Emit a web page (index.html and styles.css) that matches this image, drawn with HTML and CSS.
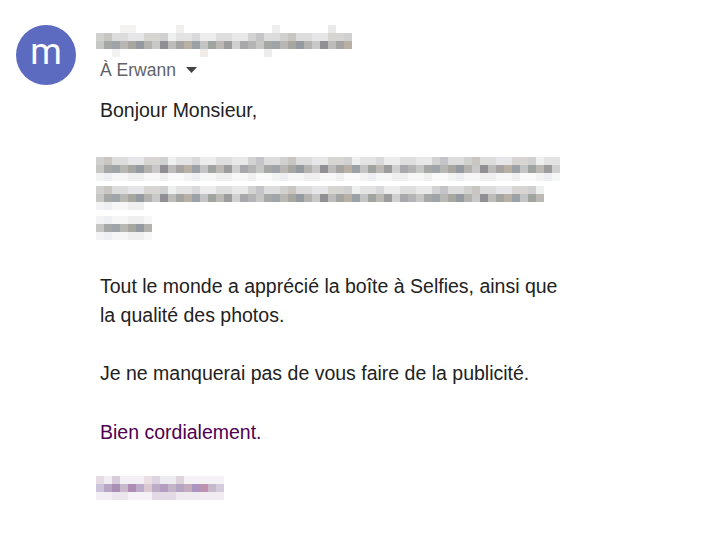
FILE: index.html
```html
<!DOCTYPE html>
<html lang="fr">
<head>
  <meta charset="UTF-8" />
  <title>Message</title>
  <link rel="stylesheet" href="styles.css">
</head>
<body>

  <!-- Message -->
  <div class="message">
    <div class="avatar">m</div>

    <div class="content">
      <!-- En-tête -->
      <div class="header">
        <div class="blur sender">
          <div class="row r-top"></div>
          <div class="row r-mid"></div>
          <div class="row r-dark"></div>
          <div class="row r-low"></div>
        </div>
        <div class="recipient">
          À Erwann
          <svg class="caret" width="11" height="6" viewBox="0 0 11 6"><path d="M0 0h11L5.5 6z" fill="#444"/></svg>
        </div>
      </div>

      <!-- Corps -->
      <div class="body">
        <p>Bonjour Monsieur,</p>

        <div class="blur-para">
          <div class="blur line" style="width: 464px">
            <div class="row r-mid"></div>
            <div class="row r-dark"></div>
            <div class="row r-faint"></div>
          </div>
          <div class="blur line" style="width: 448px">
            <div class="row r-mid"></div>
            <div class="row r-dark"></div>
            <div class="row r-faint short"></div>
          </div>
          <div class="blur line" style="width: 56px">
            <div class="row r-faint"></div>
            <div class="row r-dark"></div>
            <div class="row r-faint"></div>
          </div>
        </div>

        <p>Tout le monde a apprécié la boîte à Selfies, ainsi que<br>la qualité des photos.</p>

        <p>Je ne manquerai pas de vous faire de la publicité.</p>

        <p class="quoted">Bien cordialement.</p>

        <div class="blur signature">
          <div class="row s-top"></div>
          <div class="row s-mid"></div>
          <div class="row s-low"></div>
        </div>
      </div>
    </div>
  </div>

</body>
</html>
```

FILE: styles.css
```css
/* Général */
body {
  margin: 0;
  background: #fff;
  color: #222;
  font-family: "Liberation Sans", Arial, sans-serif;
}

.message {
  display: flex;
  padding: 25px 0 0 16px;
}

/* Avatar */
.avatar {
  width: 60px;
  height: 60px;
  border-radius: 50%;
  background: #5c6bc0;
  color: #fff;
  font-family: Roboto, "Liberation Sans", sans-serif;
  font-size: 36px;
  line-height: 54px;
  text-align: center;
  flex-shrink: 0;
}

.content {
  margin-left: 20px;
}

/* En-tête */
.recipient {
  margin-top: 1px;
  padding-left: 4px;
  font-size: 17.5px;
  line-height: 24px;
  color: #5f6368;
  display: flex;
  align-items: center;
}
.caret {
  margin-left: 10px;
}

/* Flou (mosaïque) */
.blur .row {
  height: 8px;
}
.sender {
  width: 256px;
}
.r-top {
  background: repeating-linear-gradient(90deg,
    #fff 0 24px, #f4f3f1 24px 40px, #fff 40px 80px, #f1efec 80px 88px,
    #fff 88px 176px, #eeeeee 176px 184px, #fff 184px 232px, #e9e9e9 232px 240px, #fff 240px 256px);
}
.r-mid {
  background: repeating-linear-gradient(90deg,
    #d0d0ce 0 8px, #c9c6c2 8px 16px, #dcdcdc 16px 32px, #e6e6e8 32px 48px,
    #d6d5d2 48px 64px, #cfd0cf 64px 72px, #eef0f0 72px 80px, #e3e3e3 80px 96px,
    #d9d9dc 96px 104px, #ececec 104px 120px, #dedede 120px 136px, #e8e8e8 136px 152px,
    #d2d2d2 152px 160px, #c3c3c8 160px 168px, #dcdcdc 168px 184px);
}
.r-dark {
  background: repeating-linear-gradient(90deg,
    #c6c6c4 0 8px, #a6a8a8 8px 16px, #9fa4a8 16px 24px, #b8b7b4 24px 32px,
    #a8a6a0 32px 40px, #949aa0 40px 48px, #b4b2ae 48px 56px, #c8c8c8 56px 64px,
    #8f8f94 64px 72px, #bdbcbb 72px 80px, #a4a5a3 80px 88px, #b8b0a4 88px 96px,
    #9aa2a8 96px 104px, #c4c4c4 104px 112px, #a0a4a0 112px 120px, #bcb8b4 120px 128px,
    #9c9c9c 128px 136px, #d0d0d0 136px 144px, #a8a8ac 144px 152px, #b4b4b4 152px 160px);
}
.r-low {
  background: repeating-linear-gradient(90deg,
    #fff 0 16px, #f2f2f2 16px 24px, #fff 24px 104px, #eeebe8 104px 112px,
    #fff 112px 168px, #ededed 168px 176px, #fff 176px 256px);
}
.r-faint {
  background: repeating-linear-gradient(90deg,
    #f3f3f3 0 8px, #eeeff2 8px 16px, #f6f6f6 16px 32px, #efefef 32px 48px,
    #f7f7f7 48px 64px, #f0f0f0 64px 72px, #fafafa 72px 88px);
}

.blur-para {
  margin-bottom: 29.25px;
}
.blur.line {
  display: flex;
  flex-direction: column;
  justify-content: center;
  height: 29.25px;
  margin-left: -4px;
}
.blur.line .row {
  width: 100%;
}
.blur.line .row.short {
  width: 48px;
}

/* Corps */
.body {
  margin-top: 14px;
  padding-left: 4px;
  font-size: 19.5px;
  line-height: 29.25px;
}
.body p {
  margin: 0 0 29.25px;
}
.quoted {
  color: #500050;
}

.signature {
  width: 128px;
  margin-left: -4px;
  margin-top: 0;
}
.s-top {
  background: repeating-linear-gradient(90deg,
    #e4dce2 0 8px, #f0eef2 8px 16px, #d8ccdc 16px 24px, #f2f0f4 24px 48px,
    #ecdfe4 48px 56px, #dcd4e0 56px 64px, #ececf0 64px 80px, #e0d4dc 80px 88px, #f4f2f4 88px 128px);
}
.s-mid {
  background: repeating-linear-gradient(90deg,
    #ccc4d8 0 8px, #b8a4c4 8px 16px, #a890b4 16px 24px, #c8b8cc 24px 32px,
    #ac8cb4 32px 40px, #bcacc8 40px 48px, #dcc8d0 48px 56px, #bcacc8 56px 64px,
    #b49cc0 64px 72px, #c4b4c8 72px 80px, #b4a4c4 80px 88px, #c4acbc 88px 96px,
    #ac94c0 96px 104px, #bc94b0 104px 112px, #c8b8cc 112px 120px, #d4ccdc 120px 128px);
}
.s-low {
  background: repeating-linear-gradient(90deg,
    #f2eef2 0 16px, #ebe6ee 16px 32px, #f4f2f6 32px 56px, #e4dae6 56px 80px,
    #eeeaf0 80px 104px, #f0ecf2 104px 128px);
}
```
